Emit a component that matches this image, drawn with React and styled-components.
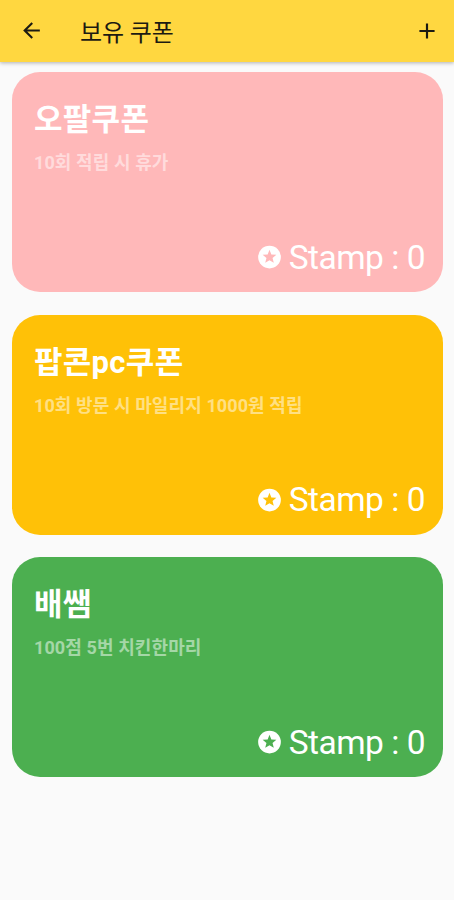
import React from 'react';
import styled, { createGlobalStyle } from 'styled-components';

const GlobalStyle = createGlobalStyle`
  body {
    margin: 0;
    background: #fafafa;
    font-family: Roboto, "Noto Sans CJK KR", sans-serif;
  }
`;

const Screen = styled.div`
  min-height: 900px;
  overflow: hidden;
`;

const AppBar = styled.header`
  display: flex;
  align-items: center;
  box-sizing: border-box;
  height: 62px;
  padding: 0 14px 0 19px;
  background: #ffd740;
  box-shadow: 0 1px 4px rgba(0, 0, 0, 0.3);
`;

const IconButton = styled.button`
  display: flex;
  padding: 0 0 1px;
  border: none;
  background: none;
  color: #1c1a12;
  cursor: pointer;
`;

const Title = styled.h1`
  flex: 1;
  margin: 4px 0 0 36px;
  font-size: 24px;
  font-weight: 400;
  line-height: 30px;
  letter-spacing: -0.1px;
  color: #1c1a12;
`;

const CouponList = styled.main`
  display: flex;
  flex-direction: column;
  gap: 22.5px;
  padding: 10.3px 11px 0 11.6px;
`;

const Card = styled.section`
  display: flex;
  flex-direction: column;
  box-sizing: border-box;
  height: 220px;
  padding: 30px 18px 14.5px 22.4px;
  border-radius: 28px;
  background: ${(props) => props.$color};
  color: white;
`;

const CardName = styled.h2`
  margin: 0;
  font-size: 31px;
  font-weight: 700;
  line-height: 36px;
  letter-spacing: 0.3px;
`;

const CardDetail = styled.p`
  margin: 14px 0 0;
  font-size: 18px;
  font-weight: 700;
  line-height: 22px;
  letter-spacing: 0.1px;
  color: rgba(255, 255, 255, 0.5);
`;

const StampRow = styled.div`
  display: flex;
  align-items: center;
  justify-content: flex-end;
  gap: 6px;
  margin-top: auto;
  font-size: 33.5px;
  line-height: 40px;
  letter-spacing: -0.5px;
`;

const ArrowIcon = () => (
  <svg width="25" height="25" viewBox="0 0 24 24" fill="currentColor">
    <path d="M20 11H7.83l5.59-5.59L12 4l-8 8 8 8 1.41-1.41L7.83 13H20v-2z" />
  </svg>
);

const PlusIcon = () => (
  <svg width="26" height="26" viewBox="0 0 24 24" fill="currentColor">
    <path d="M19 13h-6v6h-2v-6H5v-2h6V5h2v6h6v2z" />
  </svg>
);

const StarIcon = ({ hole }) => (
  <svg width="27" height="27" viewBox="0 0 24 24">
    <circle cx="12" cy="11.6" r="10.1" fill="currentColor" />
    <path
      d="M12 5.2l1.65 4.1 4.45.3-3.4 2.85 1.1 4.3L12 14.4l-3.8 2.35 1.1-4.3L5.9 9.6l4.45-.3z"
      fill={hole}
    />
  </svg>
);

const coupons = [
  { name: '오팔쿠폰', detail: '10회 적립 시 휴가', stamp: 0, color: '#ffb8b9' },
  { name: '팝콘pc쿠폰', detail: '10회 방문 시 마일리지 1000원 적립', stamp: 0, color: '#ffc107' },
  { name: '배쌤', detail: '100점 5번 치킨한마리', stamp: 0, color: '#4caf50' },
];

const App = () => (
  <Screen>
    <GlobalStyle />
    <AppBar>
      <IconButton aria-label="뒤로"><ArrowIcon /></IconButton>
      <Title>보유 쿠폰</Title>
      <IconButton aria-label="추가"><PlusIcon /></IconButton>
    </AppBar>
    <CouponList>
      {coupons.map((coupon) => (
        <Card key={coupon.name} $color={coupon.color}>
          <CardName>{coupon.name}</CardName>
          <CardDetail>{coupon.detail}</CardDetail>
          <StampRow>
            <StarIcon hole={coupon.color} />
            <span>Stamp : {coupon.stamp}</span>
          </StampRow>
        </Card>
      ))}
    </CouponList>
  </Screen>
);

export default App;
